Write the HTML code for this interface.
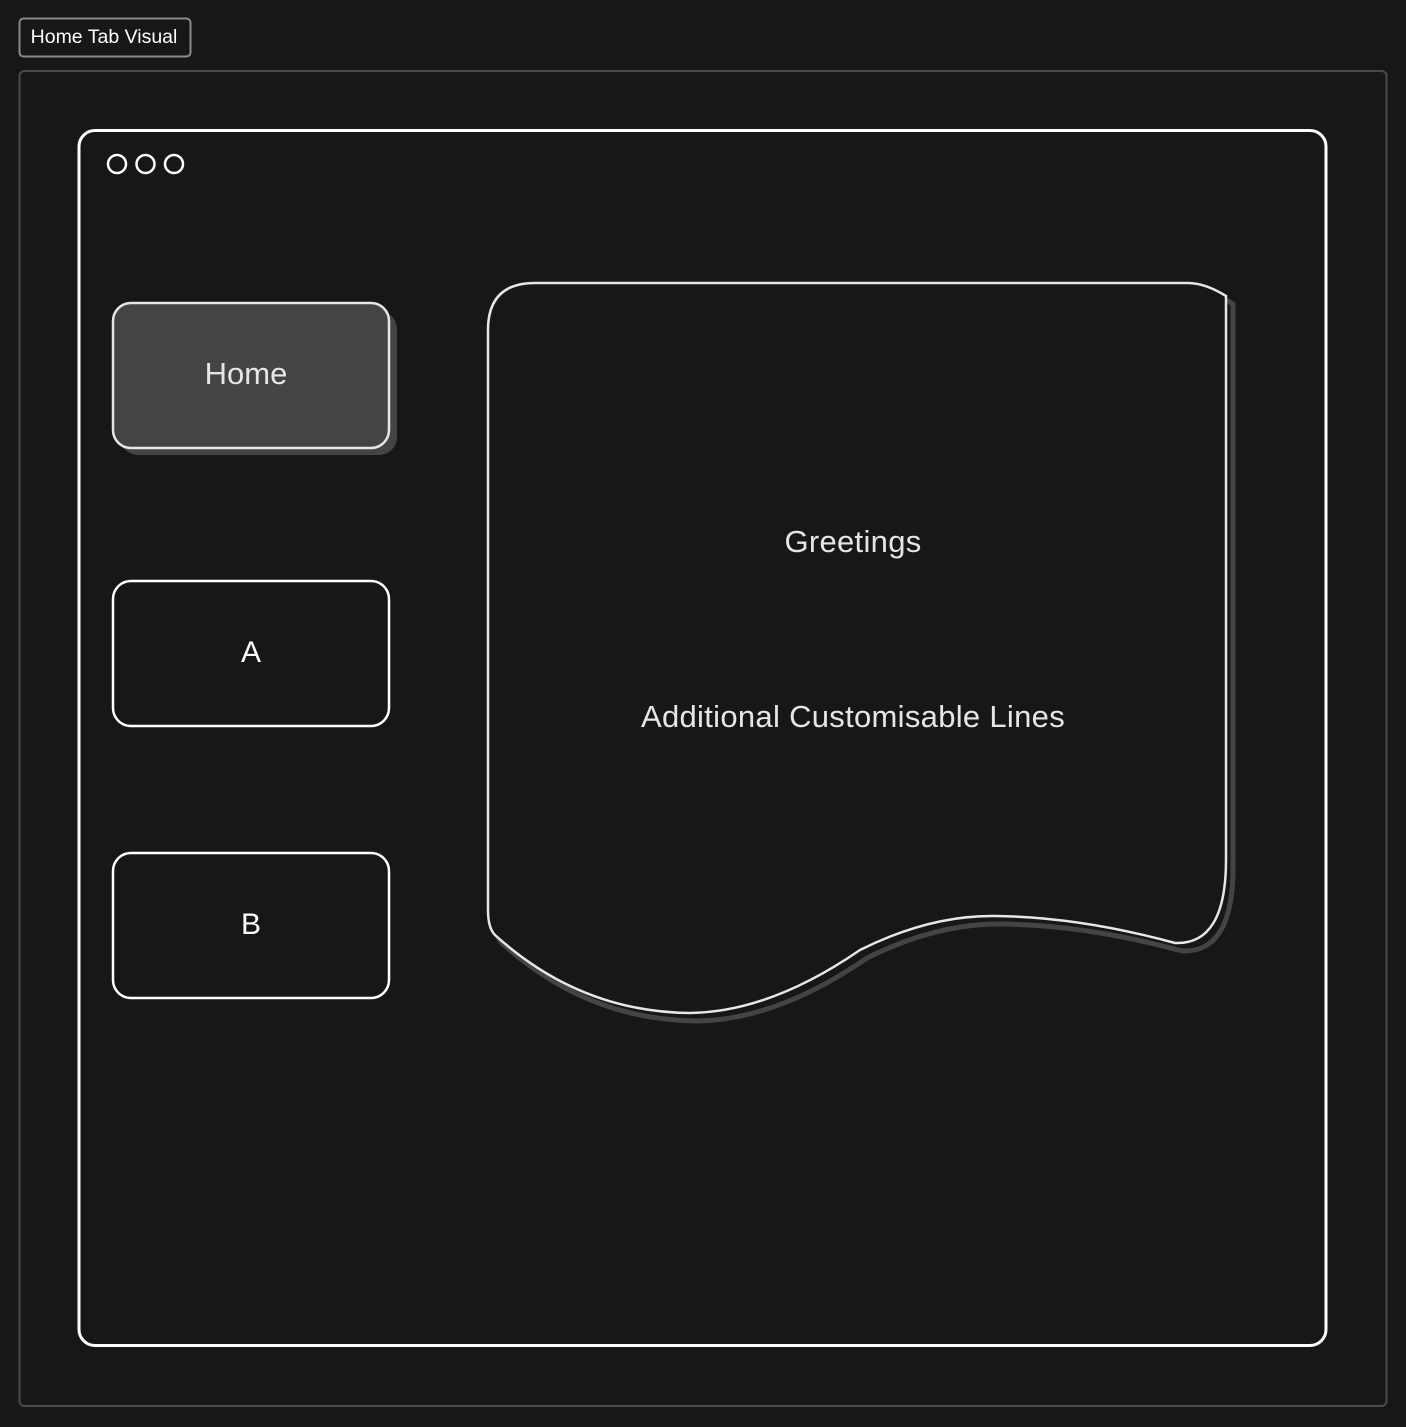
<!DOCTYPE html>
<html><head><meta charset="utf-8"><style>
html,body{margin:0;padding:0;background:#171717;width:1406px;height:1427px;overflow:hidden}
svg{display:block}
text{font-family:"Liberation Sans",sans-serif}
</style></head><body>
<svg width="1406" height="1427" viewBox="0 0 1406 1427">
<rect x="0" y="0" width="1406" height="1427" fill="#171717"/>
<rect x="19.5" y="18.5" width="171" height="38" rx="4" fill="#171717" stroke="#8a8a8a" stroke-width="2"/>
<text x="104" y="43" font-size="19.5" fill="#fff" text-anchor="middle">Home Tab Visual</text>
<rect x="19.5" y="71" width="1367" height="1335" rx="5" fill="none" stroke="#4a4a4a" stroke-width="2"/>
<rect x="79" y="130.5" width="1247" height="1215" rx="16" fill="none" stroke="#fff" stroke-width="3"/>
<circle cx="117" cy="164" r="9" fill="none" stroke="#fff" stroke-width="2.5"/>
<circle cx="145.5" cy="164" r="9" fill="none" stroke="#fff" stroke-width="2.5"/>
<circle cx="174" cy="164" r="9" fill="none" stroke="#fff" stroke-width="2.5"/>
<rect x="120" y="311" width="277" height="144" rx="18" fill="#444"/>
<rect x="113" y="303" width="276" height="145" rx="18" fill="#444" stroke="#e6e6e6" stroke-width="2.5"/>
<text x="246" y="384" font-size="31" fill="#e6e6e6" text-anchor="middle">Home</text>
<rect x="113" y="581" width="276" height="145" rx="18" fill="none" stroke="#fff" stroke-width="2.5"/>
<text x="251" y="662" font-size="30" fill="#fff" text-anchor="middle">A</text>
<rect x="113" y="853" width="276" height="145" rx="18" fill="none" stroke="#fff" stroke-width="2.5"/>
<text x="251" y="934" font-size="30" fill="#fff" text-anchor="middle">B</text>
<g transform="translate(7,8)">
<path d="M488,330 Q488,283 535,283 L1188,283 Q1205,283 1226,296 L1226,860 Q1226,945 1175,943 Q1080,917 995,916 Q930,915 860,950 Q770,1012 690,1013 Q580,1012 495,935 Q488,928 488,910 Z" fill="none" stroke="#444" stroke-width="5"/>
</g>
<path d="M488,330 Q488,283 535,283 L1188,283 Q1205,283 1226,296 L1226,860 Q1226,945 1175,943 Q1080,917 995,916 Q930,915 860,950 Q770,1012 690,1013 Q580,1012 495,935 Q488,928 488,910 Z" fill="#171717" stroke="#e6e6e6" stroke-width="2.5"/>
<text x="853" y="552" font-size="31" letter-spacing="0.3" fill="#e6e6e6" text-anchor="middle">Greetings</text>
<text x="853" y="727" font-size="31" letter-spacing="0.3" fill="#e6e6e6" text-anchor="middle">Additional Customisable Lines</text>
</svg>
</body></html>
